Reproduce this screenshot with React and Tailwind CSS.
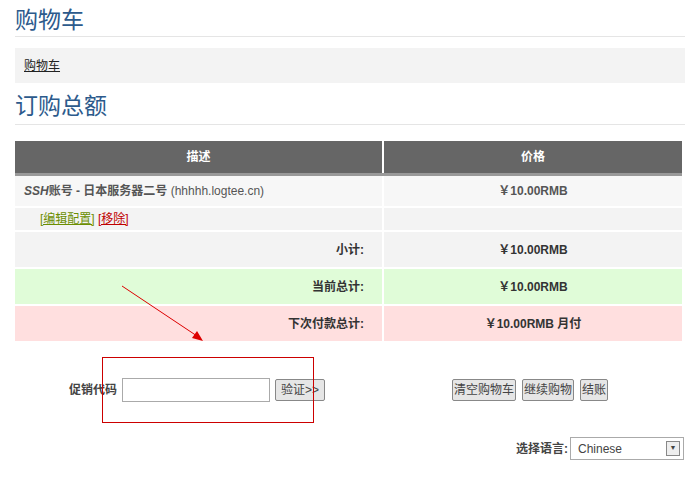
export default function App() {
  const font = { fontFamily: '"Liberation Sans", "Noto Sans CJK SC", sans-serif' };
  const cell = "border-b-2 border-white";
  return (
    <div className="relative h-[490px] w-[700px] bg-white px-[15px] text-[#333]" style={font}>
      <h1 className="border-b border-[#e5e5e5] pb-[2px] pt-[6px] text-[23px] leading-[28px] text-[#2c5a8c]">购物车</h1>
      <div className="mt-[11px] flex h-[35px] items-center bg-[#f3f3f3] px-[9px] text-[12px] text-[#222] underline">购物车</div>
      <h2 className="mt-[9px] border-b border-[#e5e5e5] pb-1 text-[23px] leading-[28px] text-[#2c5a8c]">订购总额</h2>
      <table className="mt-[16px] w-[667px] border-collapse text-[12px]">
        <thead>
          <tr className="h-[33px] bg-[#666] text-white">
            <th className="w-[368px] border-b-[3px] border-r-2 border-b-[#999] border-r-white font-bold">描述</th>
            <th className="border-b-[3px] border-b-[#999] font-bold">价格</th>
          </tr>
        </thead>
        <tbody>
          <tr className="h-[33px] bg-[#f7f7f7]">
            <td className={`${cell} border-r-2 px-[9px] text-[#555]`}>
              <b className="italic">SSH</b><b>账号 - 日本服务器二号</b> (hhhhh.logtee.cn)
            </td>
            <td className={`${cell} text-center font-bold text-[#555]`}>￥10.00RMB</td>
          </tr>
          <tr className="h-[24px] bg-[#f3f3f3]">
            <td className={`${cell} border-r-2 pl-[25px] text-[12px]`}>
              <span className="text-[#6b8e00] underline">[编辑配置]</span>{" "}
              <span className="text-[#c00000] underline">[移除]</span>
            </td>
            <td className={cell}></td>
          </tr>
          <tr className="h-[37px] bg-[#f3f3f3] font-bold">
            <td className={`${cell} border-r-2 pr-[18px] text-right`}>小计:</td>
            <td className={`${cell} text-center`}>￥10.00RMB</td>
          </tr>
          <tr className="h-[37px] bg-[#e0fcd8] font-bold">
            <td className={`${cell} border-r-2 pr-[18px] text-right`}>当前总计:</td>
            <td className={`${cell} text-center`}>￥10.00RMB</td>
          </tr>
          <tr className="h-[36px] bg-[#ffdfdf] font-bold">
            <td className="border-r-2 border-white pr-[18px] text-right">下次付款总计:</td>
            <td className="text-center">￥10.00RMB 月付</td>
          </tr>
        </tbody>
      </table>
      <div className="mt-[36px] flex h-[26px] items-center text-[12px]">
        <div className="flex w-[368px] items-center">
          <span className="ml-[54px] font-bold text-[#444]">促销代码</span>
          <input className="ml-[5px] h-[24px] w-[148px] border border-[#aaa] bg-white" />
          <button className="ml-[5px] h-[22px] w-[50px] rounded-[2px] border border-[#888] bg-[#e6e6e6] text-[12px] text-[#444]">验证&gt;&gt;</button>
        </div>
        <div className="ml-[69px] flex gap-[6px]">
          <button className="h-[22px] rounded-[2px] border border-[#888] bg-[#e6e6e6] px-[1px] text-[#444]">清空购物车</button>
          <button className="h-[22px] rounded-[2px] border border-[#888] bg-[#e6e6e6] px-[1px] text-[#444]">继续购物</button>
          <button className="h-[22px] rounded-[2px] border border-[#888] bg-[#e6e6e6] px-[1px] text-[#444]">结账</button>
        </div>
      </div>
      <div className="mt-[34px] flex items-center justify-end pr-[1px] text-[12px]">
        <span className="mr-[2px] font-bold text-[#444]">选择语言:</span>
        <div className="flex h-[23px] w-[114px] items-center justify-between border border-[#aaa] pl-[7px] pr-[3px] text-[#444]">
          <span>Chinese</span>
          <span className="flex h-[15px] w-[14px] items-center justify-center border border-[#888] bg-[#eee] text-[7px]">▼</span>
        </div>
      </div>
      <svg className="pointer-events-none absolute left-0 top-0" width="700" height="490">
        <line x1="122" y1="286" x2="200" y2="338" stroke="#d00" strokeWidth="1" />
        <polygon points="203,341 192,338 197,331" fill="#d00" />
        <rect x="102.5" y="357.5" width="211" height="65" fill="none" stroke="#c00" strokeWidth="1" />
      </svg>
    </div>
  );
}
